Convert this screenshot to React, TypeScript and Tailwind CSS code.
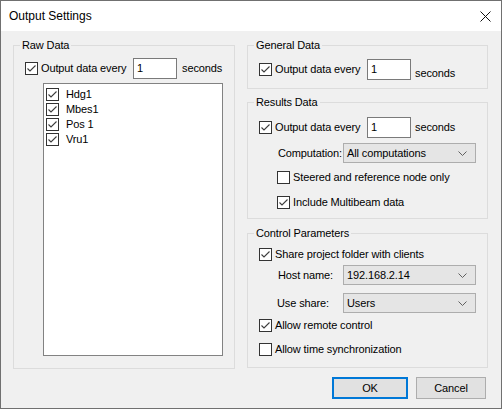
import React from "react";

function Check({ checked }: { checked?: boolean }) {
  return (
    <span className="w-[13px] h-[13px] border border-[#333333] bg-white flex items-center justify-center shrink-0">
      {checked && (
        <svg width="11" height="11" viewBox="0 0 11 11">
          <path d="M1.5 5.5 L4 8 L9.5 2.5" stroke="#3c3c3c" strokeWidth="1.1" fill="none" />
        </svg>
      )}
    </span>
  );
}

function Combo({ value }: { value: string }) {
  return (
    <div className="w-[133px] h-[20px] border border-[#adadad] bg-[#e5e5e5] flex items-center justify-between pl-[3px] pr-[8px]">
      <span>{value}</span>
      <svg width="9" height="5" viewBox="0 0 9 5">
        <path d="M0.5 0.5 L4.5 4.5 L8.5 0.5" stroke="#606060" strokeWidth="1" fill="none" />
      </svg>
    </div>
  );
}

function Legend({ children }: { children: React.ReactNode }) {
  return <legend className="ml-[6px] px-[2px] leading-[13px]">{children}</legend>;
}

export default function App() {
  return (
    <div className="w-[502px] h-[409px] border border-[#707070] bg-[#f0f0f0] flex flex-col text-[11px] leading-[13px] tracking-[-0.12px] text-black font-['Liberation_Sans',Arial,sans-serif]">
      <div className="h-[30px] bg-white flex items-center justify-between pl-[8px] pr-[10px] shrink-0">
        <span className="text-[12px] tracking-normal">Output Settings</span>
        <svg width="11" height="11" viewBox="0 0 11 11">
          <path d="M0.5 0.5 L10.5 10.5 M10.5 0.5 L0.5 10.5" stroke="#111" strokeWidth="1" fill="none" />
        </svg>
      </div>
      <div className="pl-[12px] pr-[13px] pt-[8px] flex flex-col">
        <div className="flex gap-[12px]">
          <fieldset className="w-[222px] h-[330px] border border-[#dcdcdc]">
            <Legend>Raw Data</Legend>
            <div className="flex items-center mt-[6px] pl-[11px]">
              <Check checked />
              <span className="ml-[3px] w-[92px]">Output data every</span>
              <div className="w-[44px] h-[21px] border border-[#7a7a7a] bg-white flex items-center pl-[3px]">1</div>
              <span className="ml-[5px]">seconds</span>
            </div>
            <div className="ml-[29px] mt-[4px] w-[180px] h-[273px] border border-[#828282] bg-white pt-[3px] pl-[2px] flex flex-col">
              {["Hdg1", "Mbes1", "Pos 1", "Vru1"].map((t) => (
                <div key={t} className="h-[15px] flex items-center">
                  <Check checked />
                  <span className="ml-[7px]">{t}</span>
                </div>
              ))}
            </div>
          </fieldset>
          <div className="w-[241px] flex flex-col">
            <fieldset className="h-[50px] border border-[#dcdcdc]">
              <Legend>General Data</Legend>
              <div className="flex items-center mt-[7px] pl-[11px]">
                <Check checked />
                <span className="ml-[3px] w-[92px]">Output data every</span>
                <div className="w-[44px] h-[21px] border border-[#7a7a7a] bg-white flex items-center pl-[3px]">1</div>
                <span className="ml-[4px] pt-[8px]">seconds</span>
              </div>
            </fieldset>
            <fieldset className="mt-[7px] h-[123px] border border-[#dcdcdc]">
              <Legend>Results Data</Legend>
              <div className="flex items-center mt-[8px] pl-[11px]">
                <Check checked />
                <span className="ml-[3px] w-[92px]">Output data every</span>
                <div className="w-[44px] h-[21px] border border-[#7a7a7a] bg-white flex items-center pl-[3px]">1</div>
                <span className="ml-[4px]">seconds</span>
              </div>
              <div className="flex items-center mt-[5px] pl-[30px]">
                <span className="w-[65px]">Computation:</span>
                <Combo value="All computations" />
              </div>
              <div className="flex items-center mt-[8px] pl-[29px]">
                <Check />
                <span className="ml-[3px]">Steered and reference node only</span>
              </div>
              <div className="flex items-center mt-[12px] pl-[29px]">
                <Check checked />
                <span className="ml-[3px]">Include Multibeam data</span>
              </div>
            </fieldset>
            <fieldset className="mt-[8px] h-[141px] border border-[#dcdcdc]">
              <Legend>Control Parameters</Legend>
              <div className="flex items-center mt-[8px] pl-[11px]">
                <Check checked />
                <span className="ml-[3px]">Share project folder with clients</span>
              </div>
              <div className="flex items-center mt-[4px] pl-[30px]">
                <span className="w-[65px]">Host name:</span>
                <Combo value="192.168.2.14" />
              </div>
              <div className="flex items-center mt-[8px] pl-[29px]">
                <span className="w-[66px]">Use share:</span>
                <Combo value="Users" />
              </div>
              <div className="flex items-center mt-[6px] pl-[11px]">
                <Check checked />
                <span className="ml-[3px]">Allow remote control</span>
              </div>
              <div className="flex items-center mt-[11px] pl-[11px]">
                <Check />
                <span className="ml-[3px]">Allow time synchronization</span>
              </div>
            </fieldset>
          </div>
        </div>
        <div className="flex justify-end gap-[8px] mt-[8px] pr-[2px]">
          <button className="w-[76px] h-[22px] border-2 border-[#0078d7] bg-[#e1e1e1] flex items-center justify-center">OK</button>
          <button className="w-[70px] h-[22px] border border-[#adadad] bg-[#e1e1e1] flex items-center justify-center">Cancel</button>
        </div>
      </div>
    </div>
  );
}
